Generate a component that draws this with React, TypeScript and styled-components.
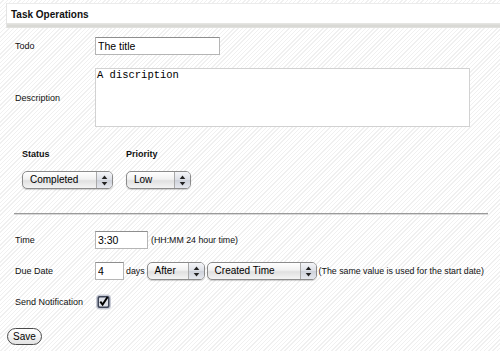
import * as React from 'react'
import styled, { createGlobalStyle } from 'styled-components'

const Global = createGlobalStyle`
  html, body {
    margin: 0;
    padding: 0;
  }
  body {
    width: 500px;
    height: 351px;
    overflow: hidden;
    font-family: "Liberation Sans", Arial, sans-serif;
    color: #111;
    background-color: #fff;
    background-image: repeating-linear-gradient(
      135deg,
      #ffffff 0px,
      #ffffff 2px,
      #f0f0f0 2px,
      #f0f0f0 3px
    );
  }
`

const Page = styled.div`
  width: 500px;
  height: 351px;
  padding-top: 3px;
  box-sizing: border-box;
`

const Header = styled.div`
  margin-left: 6px;
  height: 25px;
  box-sizing: border-box;
  border-left: 1px solid #e4e4e4;
  border-top: 1px solid #ececec;
  background: linear-gradient(
    to bottom,
    #ffffff 0px,
    #ffffff 19px,
    #e8e8e5 19px,
    #d6d6d2 22px,
    #e4e4e1 24px
  );
  padding: 5px 0 0 4px;
  font-size: 10px;
  font-weight: bold;
  color: #111;
`

const Form = styled.form`
  padding: 9px 0 0 15px;
  display: flex;
  flex-direction: column;
`

const Row = styled.div<{ $h: number; $mt?: number }>`
  display: grid;
  grid-template-columns: 80px auto;
  align-items: center;
  height: ${(p) => p.$h}px;
  margin-top: ${(p) => p.$mt ?? 0}px;
`

const Label = styled.label`
  font-size: 9px;
  color: #111;
`

const Field = styled.div<{ $gap?: number }>`
  display: flex;
  align-items: center;
  gap: ${(p) => p.$gap ?? 3}px;
  font-size: 9px;
`

const TextInput = styled.input<{ $w: number }>`
  width: ${(p) => p.$w}px;
  height: 18px;
  box-sizing: border-box;
  border: 1px solid #b5b5b5;
  border-top-color: #8e8e8e;
  background: #fff;
  padding: 0 0 0 2px;
  margin: 0;
  font-family: "Liberation Sans", Arial, sans-serif;
  font-size: 10.5px;
  color: #000;
  outline: none;
`

const TextArea = styled.textarea`
  width: 375px;
  height: 59px;
  box-sizing: border-box;
  border: 1px solid #d2d2d2;
  background: #fff;
  padding: 0 1px;
  margin: 0;
  resize: none;
  font-family: "Liberation Mono", "Courier New", monospace;
  font-size: 10.5px;
  color: #000;
  outline: none;
`

const Choices = styled.div`
  display: flex;
  gap: 13px;
  margin: 22px 0 0 7px;
`

const Choice = styled.div`
  display: flex;
  flex-direction: column;
  gap: 11px;
`

const ChoiceTitle = styled.div`
  font-size: 9px;
  font-weight: bold;
  height: 11px;
  line-height: 11px;
`

const PopUp = styled.div<{ $w: number }>`
  display: inline-flex;
  width: ${(p) => p.$w}px;
  height: 18px;
  box-sizing: border-box;
  border: 1px solid #8b8b8b;
  border-radius: 5px;
  overflow: hidden;
  background: linear-gradient(
    to bottom,
    #ffffff 0%,
    #f1f1f1 45%,
    #e0e0e0 55%,
    #f4f4f4 100%
  );
  box-shadow: 0 1px 1px rgba(0, 0, 0, 0.18);
  font-size: 10px;
  color: #000;
`

const PopUpText = styled.span`
  flex: 1;
  padding-left: 7px;
  line-height: 16px;
  white-space: nowrap;
`

const PopUpArrow = styled.span`
  width: 15px;
  display: flex;
  align-items: center;
  justify-content: center;
  border-left: 1px solid #a9a9a9;
  background: linear-gradient(
    to bottom,
    #f4f5f8 0%,
    #dcdfe6 50%,
    #cdd1da 51%,
    #e6e8ee 100%
  );
`

const Rule = styled.hr`
  margin: 24px 12px 0 -1px;
  border: 0;
  height: 2px;
  background: linear-gradient(to bottom, #9a9a9a 0, #9a9a9a 1px, #d8d8d8 1px);
`

const Note = styled.span`
  font-size: 8.8px;
  white-space: nowrap;
`

const CheckWrap = styled.span`
  display: inline-flex;
  margin-left: 1px;
`

const SaveButton = styled.button`
  margin: 18px 0 0 -8px;
  align-self: flex-start;
  width: 35px;
  height: 17px;
  padding: 0;
  border: 1px solid #4a4a4a;
  border-radius: 9px;
  background: linear-gradient(to bottom, #ffffff 0%, #f2f2f2 50%, #e2e2e2 100%);
  font-family: "Liberation Sans", Arial, sans-serif;
  font-size: 10px;
  color: #000;
  line-height: 15px;
`

function Arrows() {
  return (
    <svg width="7" height="11" viewBox="0 0 7 11">
      <path d="M3.5 0.5 L6.3 4 L0.7 4 Z" fill="#222" />
      <path d="M3.5 10.5 L6.3 7 L0.7 7 Z" fill="#222" />
    </svg>
  )
}

function Select({ value, width }: { value: string; width: number }) {
  return (
    <PopUp $w={width}>
      <PopUpText>{value}</PopUpText>
      <PopUpArrow>
        <Arrows />
      </PopUpArrow>
    </PopUp>
  )
}

function Checked() {
  return (
    <svg width="15" height="16" viewBox="0 0 15 16">
      <rect x="0" y="0.5" width="15" height="15" rx="4" fill="#9aa1b4" opacity="0.55" />
      <rect x="1.5" y="2" width="12" height="12" rx="2" fill="#3f4658" />
      <rect x="3" y="3.5" width="9" height="9" rx="1" fill="#dde0e8" />
      <path d="M4.3 7.6 L6.6 10.6 L11.6 3" stroke="#000" strokeWidth="2" fill="none" />
    </svg>
  )
}

export default function App(): JSX.Element {
  return (
    <Page>
      <Global />
      <Header>Task Operations</Header>
      <Form onSubmit={(e) => e.preventDefault()}>
        <Row $h={18}>
          <Label>Todo</Label>
          <Field>
            <TextInput $w={125} defaultValue="The title" />
          </Field>
        </Row>
        <Row $h={59} $mt={13}>
          <Label>Description</Label>
          <Field>
            <TextArea defaultValue="A discription" />
          </Field>
        </Row>
        <Choices>
          <Choice>
            <ChoiceTitle>Status</ChoiceTitle>
            <Select value="Completed" width={91} />
          </Choice>
          <Choice>
            <ChoiceTitle>Priority</ChoiceTitle>
            <Select value="Low" width={65} />
          </Choice>
        </Choices>
        <Rule />
        <Row $h={19} $mt={15}>
          <Label>Time</Label>
          <Field>
            <TextInput $w={53} defaultValue="3:30" />
            <Note>(HH:MM 24 hour time)</Note>
          </Field>
        </Row>
        <Row $h={18} $mt={13}>
          <Label>Due Date</Label>
          <Field $gap={2}>
            <TextInput $w={29} defaultValue="4" />
            <Note>days</Note>
            <Select value="After" width={58} />
            <Select value="Created Time" width={110} />
            <Note>(The same value is used for the start date)</Note>
          </Field>
        </Row>
        <Row $h={16} $mt={14}>
          <Label>Send Notification</Label>
          <Field>
            <CheckWrap>
              <Checked />
            </CheckWrap>
          </Field>
        </Row>
        <SaveButton type="button">Save</SaveButton>
      </Form>
    </Page>
  )
}
